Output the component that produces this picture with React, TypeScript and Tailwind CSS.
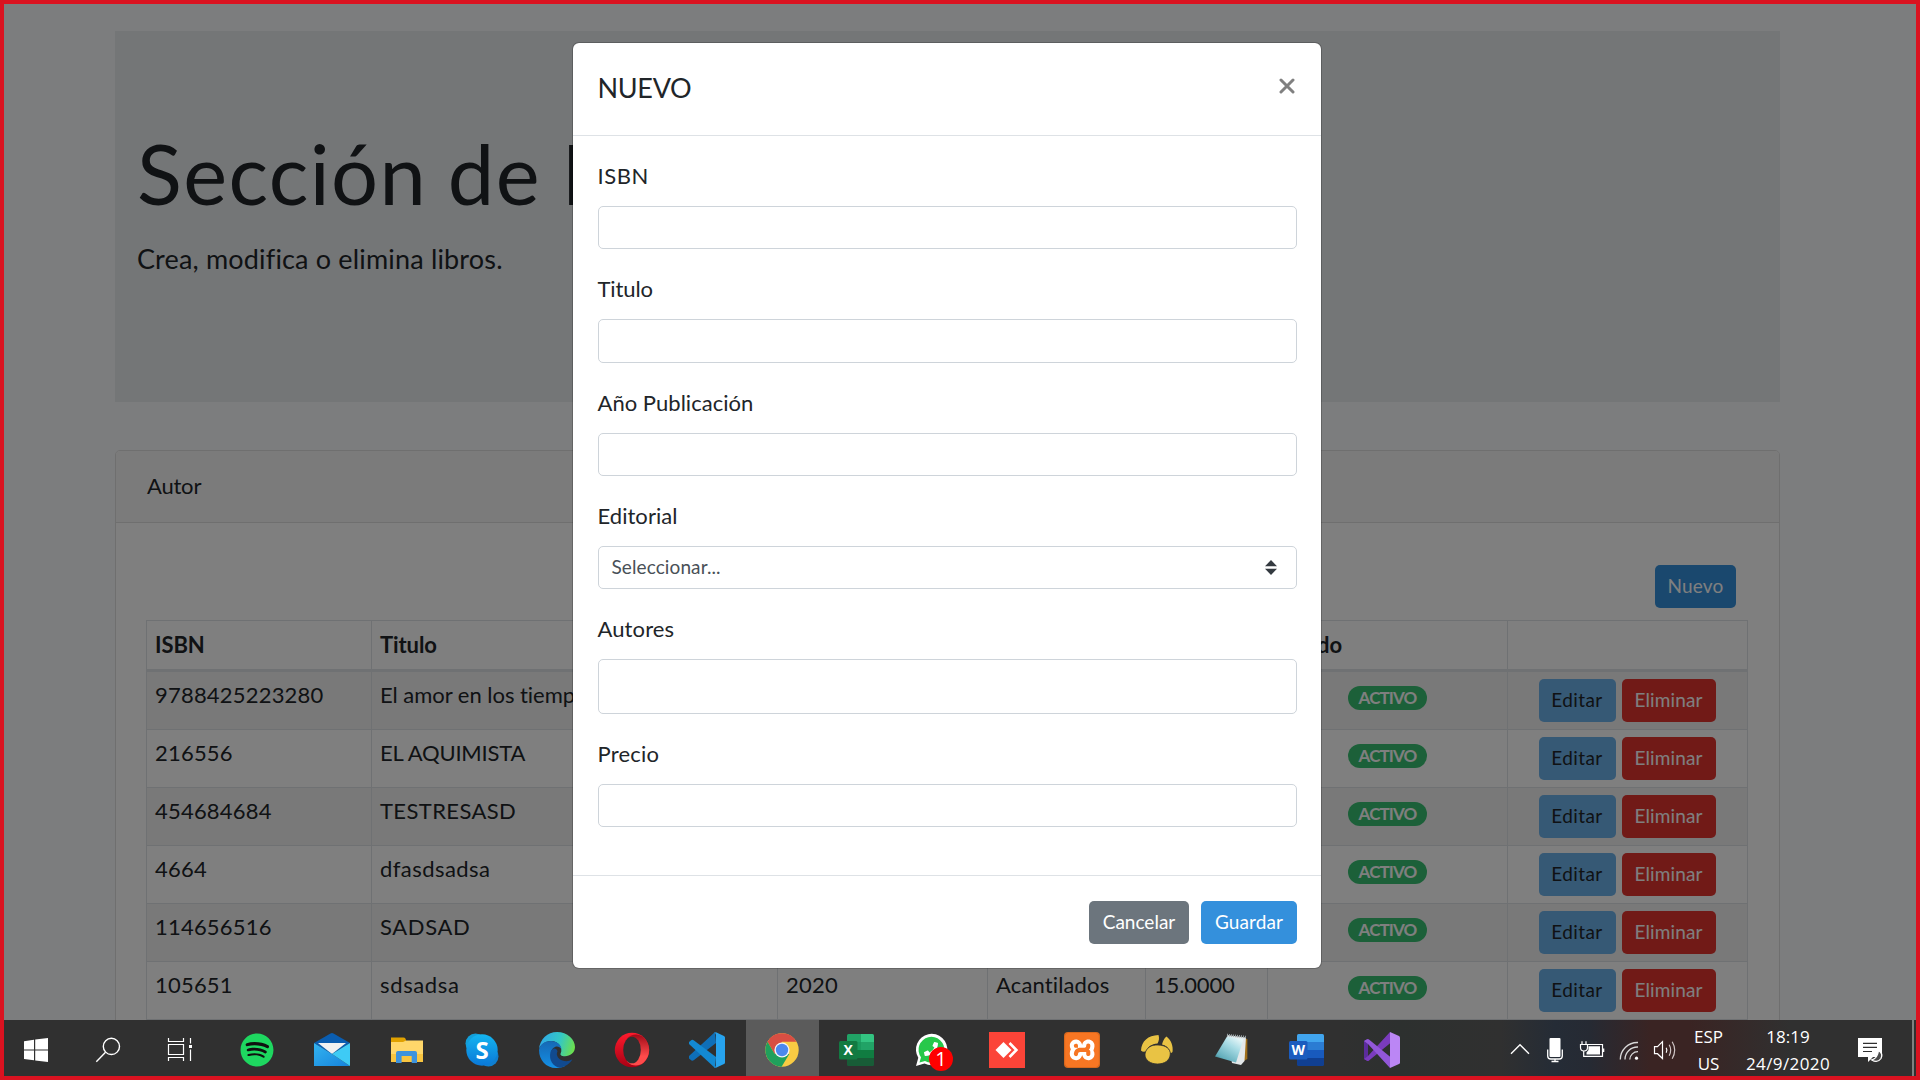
import type { ReactNode } from "react";
import { FaPhoneAlt, FaSpotify } from "react-icons/fa";
import { SiXampp } from "react-icons/si";

type Book = {
  isbn: string;
  title: string;
  year: string;
  publisher: string;
  price: string;
  titleTracking: string;
};

const books: Book[] = [
  { isbn: "9788425223280", title: "El amor en los tiempos", year: "2020", publisher: "Acantilados", price: "15.0000", titleTracking: "tracking-[-0.03px]" },
  { isbn: "216556", title: "EL AQUIMISTA", year: "2020", publisher: "Acantilados", price: "15.0000", titleTracking: "tracking-[-0.19px]" },
  { isbn: "454684684", title: "TESTRESASD", year: "2020", publisher: "Acantilados", price: "15.0000", titleTracking: "tracking-[0.38px]" },
  { isbn: "4664", title: "dfasdsadsa", year: "2020", publisher: "Acantilados", price: "15.0000", titleTracking: "tracking-[0.44px]" },
  { isbn: "114656516", title: "SADSAD", year: "2020", publisher: "Acantilados", price: "15.0000", titleTracking: "tracking-[0.64px]" },
  { isbn: "105651", title: "sdsadsa", year: "2020", publisher: "Acantilados", price: "15.0000", titleTracking: "tracking-[0.64px]" },
];

const columns = "grid grid-cols-[225px_406px_210px_158px_122px_240px_241px]";
const cell = "border-l border-[#dee2e6] pl-[8px] pt-[6px] whitespace-nowrap overflow-hidden";
const headCell = "border-l border-[#dee2e6] pl-[8px] pt-[7px] whitespace-nowrap overflow-hidden";

function Button({ className, children }: { className: string; children: ReactNode }) {
  return (
    <button className={`h-[43px] rounded-[5px] pb-[1px] text-[19px] leading-[42px] text-center ${className}`}>
      {children}
    </button>
  );
}

function BooksPage() {
  return (
    <main className="ml-[115px] w-[1665px] pt-[31px]">
      <section className="h-[371px] bg-[#e9ecef] pl-[22px] pt-[92px]">
        <h1 className="text-[83px] leading-[100px] tracking-[1.4px] [word-spacing:-2px]">Sección de Libros</h1>
        <p className="mt-[15px] text-[27px] leading-[42px] tracking-[0.17px]">Crea, modifica o elimina libros.</p>
      </section>

      <section className="mt-[48px] h-[700px] rounded-t-[5px] border border-[#dfdfdf] bg-white">
        <header className="h-[72px] rounded-t-[4px] border-b border-[#dfdfdf] bg-[#f7f7f7] pl-[31px] text-[22px] leading-[70px] tracking-[-0.2px]">
          Autor
        </header>
        <div className="px-[30px]">
          <div className="flex h-[97px] justify-end pr-[13px] pt-[42px]">
            <Button className="w-[81px] bg-[#3490dc] tracking-[0.18px] text-white">Nuevo</Button>
          </div>
          <div className="w-[1602px] border-r border-t border-[#dee2e6] text-[22px] leading-[33px]">
            <div className={`${columns} h-[51px] border-b-[3px] border-[#dee2e6] font-bold tracking-[-0.1px]`}>
              <div className={headCell}>ISBN</div>
              <div className={headCell}>Titulo</div>
              <div className={headCell}>Año Publicación</div>
              <div className={headCell}>Editorial</div>
              <div className={headCell}>Precio</div>
              <div className={headCell}>Estado</div>
              <div className={headCell} />
            </div>
            {books.map((book) => (
              <div key={book.isbn} className={`${columns} h-[58px] border-b border-[#dee2e6] odd:bg-white even:bg-[#f2f2f2]`}>
                <div className={`${cell} tracking-[0.2px]`}>{book.isbn}</div>
                <div className={`${cell} ${book.titleTracking}`}>{book.title}</div>
                <div className={`${cell} tracking-[0.24px]`}>{book.year}</div>
                <div className={`${cell} tracking-[0.14px]`}>{book.publisher}</div>
                <div className={`${cell} tracking-[-0.17px]`}>{book.price}</div>
                <div className="flex justify-center border-l border-[#dee2e6] pt-[14px]">
                  <span className="h-[24px] w-[79px] rounded-full bg-[#38c172] text-center text-[17px] font-bold leading-[23px] tracking-[-0.87px] text-white">
                    ACTIVO
                  </span>
                </div>
                <div className="flex justify-center gap-[6px] border-l border-[#dee2e6] pr-[2px] pt-[7px]">
                  <Button className="w-[77px] bg-[#6cb2eb] tracking-[0.39px] text-[#212529]">Editar</Button>
                  <Button className="w-[94px] bg-[#e3342f] tracking-[0.12px] text-white">Eliminar</Button>
                </div>
              </div>
            ))}
          </div>
        </div>
      </section>
    </main>
  );
}

function Field({ label, tracking, children }: { label: string; tracking: string; children?: ReactNode }) {
  return (
    <div className="mb-[22px]">
      <label className={`mb-[12px] block text-[22px] leading-[36px] ${tracking}`}>{label}</label>
      {children ?? <div className="h-[43.25px] rounded-[5px] border border-[#ced4da] bg-white" />}
    </div>
  );
}

function NewBookModal() {
  return (
    <div className="absolute inset-0 bg-black/50 pl-[572px] pt-[42px]">
      <div className="w-[750px] rounded-[7px] border border-black/20 bg-white bg-clip-padding">
        <header className="flex h-[93px] items-start justify-between border-b border-[#dee2e6] pl-[24.5px] pr-[26px] pt-[25px]">
          <h5 className="text-[27px] leading-[40px] tracking-[-0.3px]">NUEVO</h5>
          <svg className="mt-[10px]" width="16" height="16" viewBox="0 0 16 16" fill="none" stroke="#808080" strokeWidth="3" strokeLinecap="round">
            <path d="M2 2 14 14M14 2 2 14" />
          </svg>
        </header>
        <div className="h-[739px] px-[24.5px] pt-[22px]">
          <Field label="ISBN" tracking="tracking-[0.6px]" />
          <Field label="Titulo" tracking="tracking-[-0.1px]" />
          <Field label="Año Publicación" tracking="tracking-[0.03px]" />
          <Field label="Editorial" tracking="tracking-[0.05px]">
            <div className="flex h-[43.25px] items-center justify-between rounded-[5px] border border-[#ced4da] bg-white pl-[13px] pr-[19px] text-[19px] tracking-[0.1px] text-[#495057]">
              <span>Seleccionar...</span>
              <svg width="12" height="15" viewBox="0 0 12 15" fill="#343a40">
                <path d="M6 0 12 6.2H0ZM0 8.8H12L6 15Z" />
              </svg>
            </div>
          </Field>
          <Field label="Autores" tracking="tracking-[0.11px]">
            <div className="h-[55px] rounded-[5px] border border-[#ced4da] bg-white" />
          </Field>
          <Field label="Precio" tracking="tracking-[0.2px]" />
        </div>
        <footer className="flex h-[93px] justify-end gap-[12px] border-t border-[#dee2e6] pr-[24px] pt-[25px]">
          <Button className="w-[100px] bg-[#6c757d] text-white">Cancelar</Button>
          <Button className="w-[96px] bg-[#3490dc] tracking-[0.1px] text-white">Guardar</Button>
        </footer>
      </div>
    </div>
  );
}

function Glyph({ children }: { children: ReactNode }) {
  return (
    <svg width="36" height="36" viewBox="0 0 36 36" fill="none" className="shrink-0 overflow-visible">
      {children}
    </svg>
  );
}

function WindowsIcon() {
  return (
    <Glyph>
      <path fill="#fff" d="M6 9.2 16 7.8V17.4H6ZM17.2 7.6 30 6V17.4H17.2ZM6 18.6H16V28.3L6 26.9ZM17.2 18.6H30V30L17.2 28.4Z" />
    </Glyph>
  );
}

function SearchIcon() {
  return (
    <Glyph>
      <g stroke="#fff" strokeWidth="1.4">
        <circle cx="21.4" cy="14.4" r="8.1" />
        <path d="M15.5 20.3 6.3 29.7" />
      </g>
    </Glyph>
  );
}

function TaskViewIcon() {
  return (
    <Glyph>
      <path stroke="#fff" strokeWidth="1.2" d="M6.5 12.5H21.5V22.5H6.5ZM6.5 6V9.5H21.5V6M6.5 29V25.5H21.5V29M28.5 6V11.5M28.5 17.5V29" />
      <path fill="#fff" d="M27 13H30V16H27Z" />
    </Glyph>
  );
}

function SpotifyIcon() {
  return (
    <span className="flex h-[30px] w-[30px] items-center justify-center rounded-full bg-[#101010]">
      <FaSpotify size={34} color="#1ed760" className="shrink-0" />
    </span>
  );
}

function MailIcon() {
  return (
    <Glyph>
      <defs>
        <linearGradient id="mail" x1="0" y1="0" x2="1" y2="1">
          <stop stopColor="#33b4f0" />
          <stop offset="1" stopColor="#1683dc" />
        </linearGradient>
      </defs>
      <path fill="#0a5db0" d="M0 11 16.5 1.4Q18 .6 19.5 1.4L36 11 18 22Z" />
      <path fill="#f1f1f1" d="M4 11H32L18 22Z" />
      <path fill="url(#mail)" d="M0 11 18 22 36 34H0Z" />
      <path fill="#3ecbf5" d="M36 11V34L18 22Z" />
    </Glyph>
  );
}

function ExplorerIcon() {
  return (
    <Glyph>
      <path fill="#e0a100" d="M2 5.5H14.5Q17 5.5 17 9H34V12H2Z" />
      <path fill="#ffd76a" d="M2 10H14L17 8.5H34V30H2Z" />
      <path fill="#f9c540" d="M2 22H34V30H2Z" />
      <path fill="#3e93dd" d="M7 31V21Q7 19 9 19H26Q28 19 28 21V31H22.7V24H12.6V31Z" />
    </Glyph>
  );
}

function SkypeIcon() {
  return (
    <Glyph>
      <defs>
        <linearGradient id="skype" x1="0" y1="0" x2="0" y2="1">
          <stop stopColor="#14b5f0" />
          <stop offset="1" stopColor="#0a78d8" />
        </linearGradient>
      </defs>
      <circle cx="11.5" cy="11.5" r="10" fill="#139fd9" />
      <circle cx="24.5" cy="24.5" r="10" fill="#0f7fd0" />
      <circle cx="18" cy="18" r="15.7" fill="url(#skype)" />
      <text x="18" y="26.5" textAnchor="middle" fill="#fff" fontSize="24" fontWeight="700" fontFamily="Open Sans, sans-serif">S</text>
    </Glyph>
  );
}

function EdgeIcon() {
  return (
    <Glyph>
      <defs>
        <linearGradient id="edgeTop" x1="0" y1=".4" x2="1" y2=".6">
          <stop stopColor="#2fa8e8" />
          <stop offset=".55" stopColor="#34c8c4" />
          <stop offset="1" stopColor="#6ee04a" />
        </linearGradient>
        <linearGradient id="edgeLeft" x1="0" y1="0" x2="0" y2="1">
          <stop stopColor="#1668b4" />
          <stop offset="1" stopColor="#1490e6" />
        </linearGradient>
      </defs>
      <path fill="url(#edgeTop)" d="M0 17C1 7 8.500 0 18 0 28.500 0 36 7.500 36 15 36 21 31 24.200 26 24.200 22 24.200 20.800 22.800 21.800 21 24 17 20 9 12 9 6 9 1.500 13 0 17Z" />
      <path fill="url(#edgeLeft)" d="M0 18C1 12 6 9 12 9 18 9 22.500 13 22.500 17.500 21 14.500 18 14 16 15 12 17 11 21 13 26 15 31 20 34.500 26 34 23 35.500 20 36 17 36 7 36 0 28 0 18Z" />
      <path fill="#114a8f" d="M11.500 20C9.500 28 14 35 21 35.700 27 34.800 31.500 31 33.300 27.300 29 30.300 23.500 29.500 20 26.500 17.500 24 17.500 21 18.500 19.500 18 15.500 13 15 11.500 20Z" />
    </Glyph>
  );
}

function OperaIcon() {
  return (
    <Glyph>
      <defs>
        <linearGradient id="opera" x1="0" y1="0" x2="0" y2="1">
          <stop stopColor="#ff1b2d" />
          <stop offset="1" stopColor="#a70014" />
        </linearGradient>
        <linearGradient id="operaRight" x1="0" y1="0" x2="0" y2="1">
          <stop stopColor="#a00a18" />
          <stop offset=".7" stopColor="#ff4b4b" />
        </linearGradient>
      </defs>
      <ellipse cx="18" cy="18" rx="17.200" ry="17.300" fill="url(#opera)" />
      <path fill="url(#operaRight)" d="M13 6.500C18 1 25 1.500 29.500 5.200A17.200 17.300 0 0 1 29.500 30.800C25 34.500 18 35 13 29.500Z" />
      <ellipse cx="18" cy="18" rx="8.800" ry="13.300" fill="#303030" />
    </Glyph>
  );
}

function VsCodeIcon() {
  return (
    <Glyph>
      <path fill="#0f6fb8" d="M26 0 0 24V26.500L2.500 28.500Q3.800 29 5 28L27 11Z" />
      <path fill="#1389d2" d="M26 36 0 12V10L2.500 8Q3.800 7.500 5 8.400L27 25Z" />
      <path fill="#27a3ee" d="M25 1Q26 .2 27 .2L35 4Q36 4.500 36 5.500V30.500Q36 31.500 35 32L27 35.800Q26 35.800 25 35 27 35.500 27 33V3Q27 .800 25 1Z" />
    </Glyph>
  );
}

function ChromeIcon() {
  return (
    <Glyph>
      <circle cx="18" cy="18" r="16.700" fill="#f9cb43" />
      <path fill="#d84e43" d="M3.500 9.700A16.700 16.700 0 0 1 32.500 9.700H18L10.800 22.200Z" />
      <path fill="#20a05c" d="M3.500 9.700 10.800 22.200 18 26 17.200 34.700A16.700 16.700 0 0 1 3.500 9.700Z" />
      <path fill="#20a05c" d="M10.500 21.500 25.300 22.100 17.600 34.700 10 30Z" />
      <circle cx="18" cy="18" r="7.600" fill="#f4f4f4" />
      <circle cx="18" cy="18" r="6.200" fill="#4b88ee" />
    </Glyph>
  );
}

function OfficeIcon({ letter, bands, front }: { letter: string; bands: string[]; front: string }) {
  return (
    <Glyph>
      <defs>
        <clipPath id={`office-${letter}`}>
          <rect x="8" y="2" width="27" height="32" rx="1.500" />
        </clipPath>
      </defs>
      <g clipPath={`url(#office-${letter})`}>
        {bands.map((color, i) => (
          <rect key={color + i} x={i % 2 ? 22 : 8} y={2 + Math.floor(i / 2) * 8} width="14" height="8" fill={color} />
        ))}
      </g>
      <rect x="0" y="9" width="18.500" height="18.500" rx="1.500" fill={front} />
      <text x="9.200" y="23.300" textAnchor="middle" fill="#fff" fontSize="14" fontWeight="700" fontFamily="Open Sans, sans-serif">{letter}</text>
    </Glyph>
  );
}

function WhatsAppIcon() {
  return (
    <span className="relative">
      <Glyph>
        <path fill="#fff" d="M2 34 4.300 25.800A15.700 15.700 0 1 1 10.500 31.500Z" />
        <path fill="#27c84a" d="M5.500 30.500 7 25.300A12.900 12.900 0 1 1 11 28.900Z" />
      </Glyph>
      <FaPhoneAlt size={14} color="#fff" className="absolute left-[10px] top-[10px] -scale-x-100" />
      <span className="absolute left-[15px] top-[15px] h-[24px] w-[24px] rounded-full bg-[#fe0000] text-center font-['Open_Sans',sans-serif] text-[20px] leading-[24px] text-white">1</span>
    </span>
  );
}

function AnyDeskIcon() {
  return (
    <Glyph>
      <path fill="#fb4438" d="M0 0H36V36H0Z" />
      <path fill="#fff" d="M6.500 18 14.500 10 22.500 18 14.500 26Z" />
      <path stroke="#fff" strokeWidth="2.600" d="M20.500 11 27.400 18 20.500 25" />
    </Glyph>
  );
}

function XamppIcon() {
  return (
    <span className="flex h-[36px] w-[36px] items-center justify-center rounded-[4px] bg-[#d8681d]">
      <span className="flex h-[32px] w-[32px] items-center justify-center rounded-[4px] bg-white">
        <SiXampp size={34} color="#f77623" className="shrink-0" />
      </span>
    </span>
  );
}

function PawIcon() {
  return (
    <Glyph>
      <path fill="#e9c344" d="M2 18.500C2.500 9 9 3.500 19.500 3 20.500 6 20 9 18.500 11.500 12.500 12 9 14.500 7.500 19 5.500 20 3.500 20 2 18.500ZM23 12.500C24 9 25 6.500 27.500 4.500 32 8 34.500 14 33.500 20 31.500 22 31 20.500 30.500 18.500 29 15 26.500 13.500 23 12.500Z" />
      <path fill="#e9c344" stroke="#303030" strokeWidth=".8" d="M6 22C7 16 12 12.500 19 13 27 13.200 31.500 17 31.300 22 31 28.500 25.500 32 18.500 32 11.500 32 5.500 28 6 22Z" />
    </Glyph>
  );
}

function NotepadIcon() {
  return (
    <Glyph>
      <defs>
        <linearGradient id="pad" x1="0" y1="1" x2=".7" y2="0">
          <stop stopColor="#1c6370" />
          <stop offset=".25" stopColor="#63aebc" />
          <stop offset=".7" stopColor="#a9dce5" />
          <stop offset="1" stopColor="#e4f5f7" />
        </linearGradient>
      </defs>
      <path fill="#a06f1a" d="M29 6 33.300 7V27L28 30Z" />
      <path fill="#e3e8ea" d="M13 3 32 5.500 30.500 29 27 33 18 31Z" />
      <path fill="url(#pad)" d="M13 4.500 29.500 7 22 30.500 1 24.500Z" />
      <path stroke="#9aa4a6" strokeWidth="2.500" strokeDasharray="1 1" d="M13 3 32 5" />
    </Glyph>
  );
}

function VisualStudioIcon() {
  return (
    <Glyph>
      <path fill="#5b2c9c" d="M0 9 4 7V29L0 27Z" />
      <path fill="#7a3bbd" d="M26 0 27 10.500 5 28.500Q4 29.500 2.500 28.500L0 27 4 24Z" />
      <path fill="#9257d8" d="M26 36 27 25.500 5 7.500Q4 6.500 2.500 7.500L0 9 4 12Z" />
      <path fill="#bb86f5" d="M26 0 35 4Q36 4.500 36 5.500V30.500Q36 31.500 35 32L26 36Z" />
    </Glyph>
  );
}

const apps: { name: string; icon: ReactNode; active?: boolean }[] = [
  { name: "spotify", icon: <SpotifyIcon /> },
  { name: "mail", icon: <MailIcon /> },
  { name: "explorer", icon: <ExplorerIcon /> },
  { name: "skype", icon: <SkypeIcon /> },
  { name: "edge", icon: <EdgeIcon /> },
  { name: "opera", icon: <OperaIcon /> },
  { name: "vscode", icon: <VsCodeIcon /> },
  { name: "chrome", icon: <ChromeIcon />, active: true },
  {
    name: "excel",
    icon: (
      <OfficeIcon letter="X" front="#127a42" bands={["#21a366", "#33c481", "#1a9a5e", "#21a366", "#107c41", "#107c41", "#185c37", "#185c37"]} />
    ),
  },
  { name: "whatsapp", icon: <WhatsAppIcon /> },
  { name: "anydesk", icon: <AnyDeskIcon /> },
  { name: "xampp", icon: <XamppIcon /> },
  { name: "paw", icon: <PawIcon /> },
  { name: "notepad", icon: <NotepadIcon /> },
  {
    name: "word",
    icon: (
      <OfficeIcon letter="W" front="#1b5cbe" bands={["#41a5ee", "#41a5ee", "#2b7cd3", "#2b7cd3", "#185abd", "#185abd", "#103f91", "#103f91"]} />
    ),
  },
  { name: "visual-studio", icon: <VisualStudioIcon /> },
];

function Tray() {
  return (
    <div className="ml-auto flex h-full items-center">
      <span className="flex w-[35px] justify-center">
        <Glyph>
          <path stroke="#fff" strokeWidth="1.400" d="M9 21.700 18 12.700 27 21.700" />
        </Glyph>
      </span>
      <span className="flex w-[36px] justify-center">
        <Glyph>
          <rect x="12.500" y="6" width="11" height="19" rx="1" fill="#fff" />
          <path stroke="#fff" strokeWidth="1.300" d="M10.700 17.500V24Q10.700 27 13.700 27H22.300Q25.300 27 25.300 24V17.500M18 27V29.500M14.500 29.500H21.500" />
        </Glyph>
      </span>
      <span className="flex w-[37px] justify-center">
        <Glyph>
          <path stroke="#fff" strokeWidth="1.200" d="M14 12.500H28.500V24.300H9.700V19" />
          <path fill="#fff" d="M14.500 14.300H26V22.500H12.500V20.500L14.500 18ZM29 16.600H30.300V20H29Z" />
          <path stroke="#fff" strokeWidth="1.200" d="M8 9.300V12.300M12 9.300V12.300M6.500 12.500H13.500V15.500Q13.500 19 10 19 6.500 19 6.500 15.500Z" />
        </Glyph>
      </span>
      <span className="flex w-[37px] justify-center">
        <Glyph>
          <g stroke="#d9d9d9" strokeWidth="1.300">
            <path d="M9.300 27.500A17 17 0 0 1 27 10.500" />
            <path d="M14 27.500A12.500 12.500 0 0 1 27 15" />
            <path d="M18.800 27.500A8 8 0 0 1 27 19.700" />
          </g>
          <circle cx="25.500" cy="26.200" r="1.600" fill="#fff" />
        </Glyph>
      </span>
      <span className="flex w-[35px] justify-center">
        <Glyph>
          <path stroke="#fff" strokeWidth="1.200" d="M7.500 14.700H10.500L15.500 9.700V26.500L10.500 21.700H7.500ZM19.200 15.800Q20.700 18.200 19.200 20.700" />
          <path stroke="#d0c6c6" strokeWidth="1.200" d="M22.200 12.800Q25.200 18.200 22.200 23.700M25.200 9.800Q30.200 18.200 25.200 26.700" />
        </Glyph>
      </span>
      <div className="w-[53px] text-center text-[17px] leading-[27.500px]">
        <p>ESP</p>
        <p>US</p>
      </div>
      <div className="w-[107px] pr-[1px] text-center text-[17px] leading-[27.500px]">
        <p>18:19</p>
        <p className="tracking-[0.4px]">24/9/2020</p>
      </div>
      <span className="flex w-[56px] justify-center">
        <Glyph>
          <path fill="#fff" d="M6 6H30V25H21L16 30V25H6Z" />
          <path stroke="#303030" strokeWidth="1.200" d="M11 11.300H25M11 15.300H25M11 19.500H20" />
          <path fill="#4a4a4a" stroke="#fff" strokeWidth="1.300" d="M26.500 18.500Q31.500 21.500 29 26.500 25.500 31.500 19.800 28 25.500 26.500 26.500 18.500Z" />
        </Glyph>
      </span>
      <span className="ml-[14px] mr-[6px] h-full w-[2px] bg-[#808080]" />
    </div>
  );
}

function Taskbar() {
  return (
    <div className="absolute inset-x-0 bottom-0 flex h-[60px] items-center bg-[linear-gradient(90deg,#303030_0px,#303030_1340px,#2d302f_1400px,#303030_1500px,#252c36_1555px,#262a33_1590px,#3a2423_1650px,#3a2423_1690px,#303030_1790px,#303030_1920px)] font-['Open_Sans',sans-serif] text-white">
      <div className="flex">
        <span className="flex w-[72px] justify-center"><WindowsIcon /></span>
        <span className="flex w-[72px] justify-center"><SearchIcon /></span>
        <span className="flex w-[75.5px] pl-[18px]"><TaskViewIcon /></span>
      </div>
      {apps.map((app) => (
        <span
          key={app.name}
          className={`mx-[1px] flex h-full w-[73px] items-center justify-center ${app.active ? "bg-[#5b5b5b]" : ""}`}
        >
          {app.icon}
        </span>
      ))}
      <Tray />
    </div>
  );
}

export default function App() {
  return (
    <div className="relative h-[1080px] w-[1920px] overflow-hidden bg-[#f8fafc] font-[Lato,sans-serif] text-[#212529]">
      <BooksPage />
      <NewBookModal />
      <Taskbar />
      <div className="pointer-events-none absolute inset-0 border-4 border-[#da1220]" />
    </div>
  );
}
